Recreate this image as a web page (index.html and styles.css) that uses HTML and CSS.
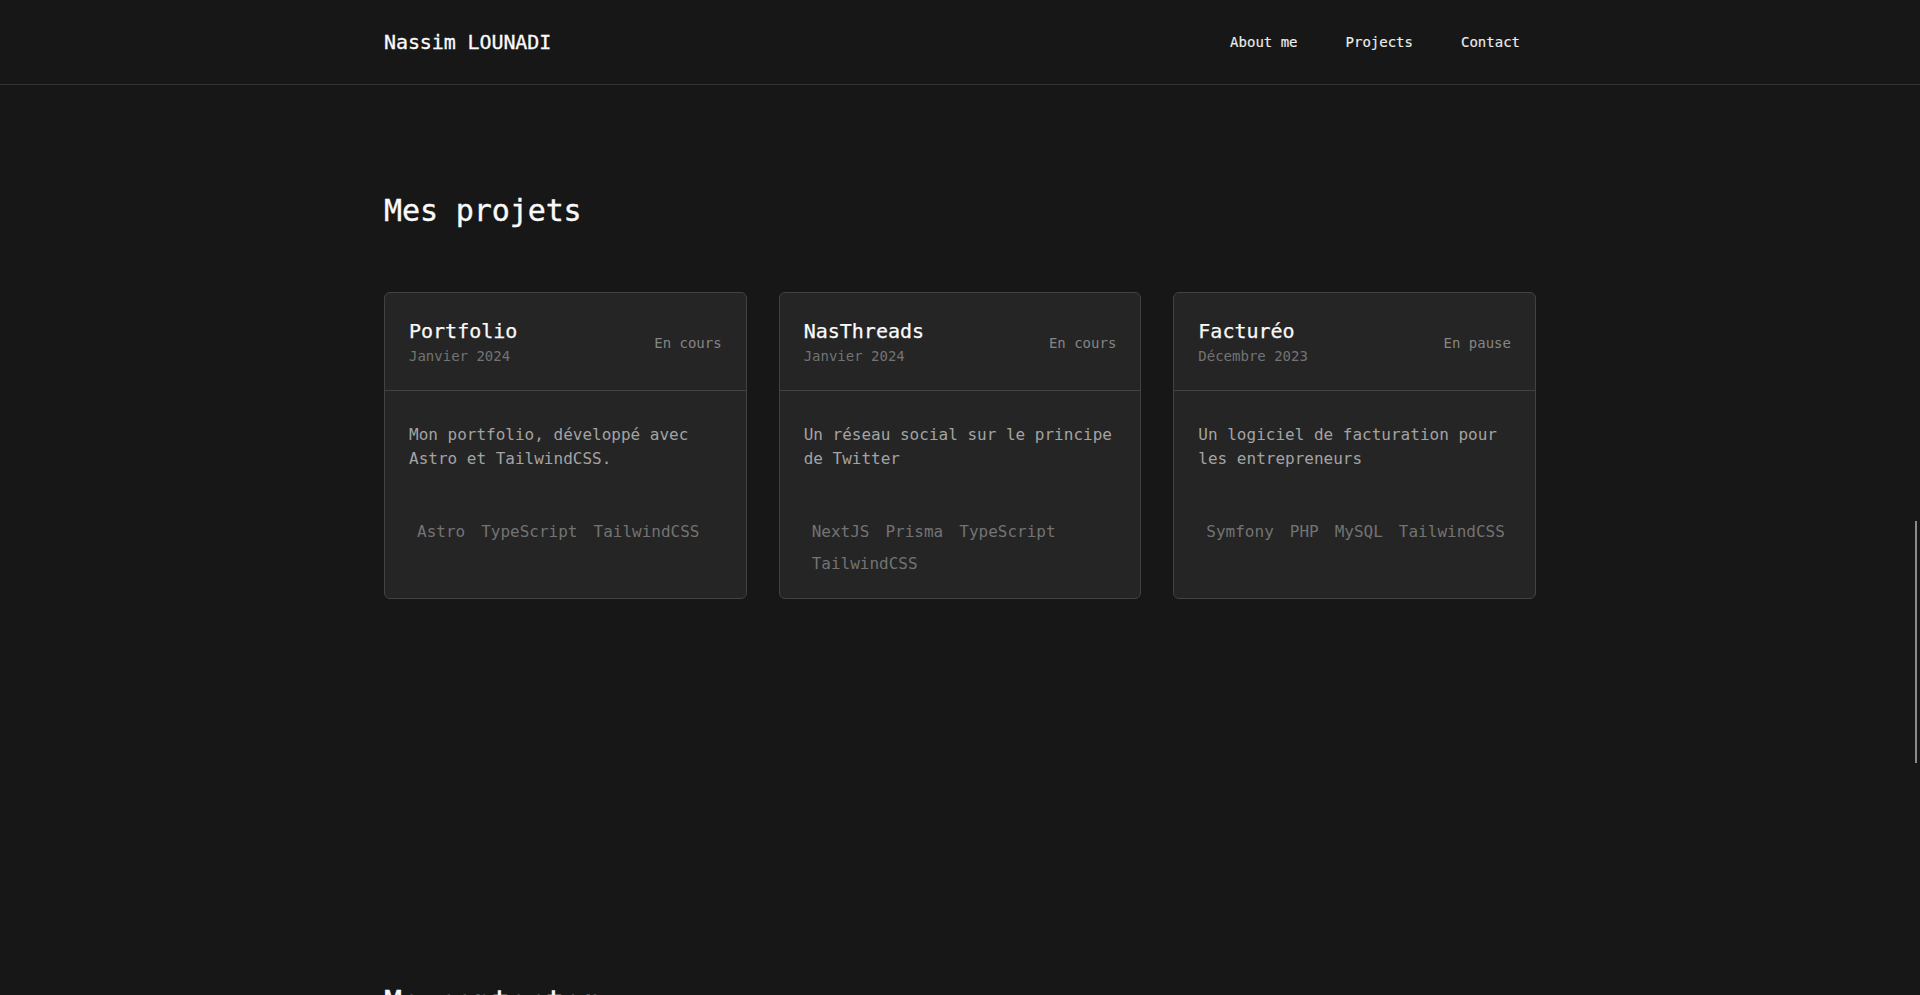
FILE: index.html
```html
<!DOCTYPE html>
<html lang="fr">
<head>
<meta charset="utf-8">
<title>Nassim LOUNADI</title>
<link rel="stylesheet" href="styles.css">
</head>
<body>
<header class="site-header">
  <div class="container header-inner">
    <a class="logo" href="#">Nassim LOUNADI</a>
    <nav class="nav">
      <a href="#about">About me</a>
      <a href="#projects">Projects</a>
      <a href="#contact">Contact</a>
    </nav>
  </div>
</header>

<main>
  <section class="container section projects" id="projects">
    <h2 class="section-title">Mes projets</h2>
    <div class="cards">
      <article class="card">
        <div class="card-head">
          <div class="card-titles">
            <h3 class="card-title">Portfolio</h3>
            <p class="card-date">Janvier 2024</p>
          </div>
          <span class="card-status">En cours</span>
        </div>
        <div class="card-body">
          <p class="card-desc">Mon portfolio, développé avec Astro et TailwindCSS.</p>
          <ul class="tags">
            <li>Astro</li><li>TypeScript</li><li>TailwindCSS</li>
          </ul>
        </div>
      </article>
      <article class="card">
        <div class="card-head">
          <div class="card-titles">
            <h3 class="card-title">NasThreads</h3>
            <p class="card-date">Janvier 2024</p>
          </div>
          <span class="card-status">En cours</span>
        </div>
        <div class="card-body">
          <p class="card-desc">Un réseau social sur le principe de Twitter</p>
          <ul class="tags">
            <li>NextJS</li><li>Prisma</li><li>TypeScript</li><li>TailwindCSS</li>
          </ul>
        </div>
      </article>
      <article class="card">
        <div class="card-head">
          <div class="card-titles">
            <h3 class="card-title">Facturéo</h3>
            <p class="card-date">Décembre 2023</p>
          </div>
          <span class="card-status">En pause</span>
        </div>
        <div class="card-body">
          <p class="card-desc">Un logiciel de facturation pour les entrepreneurs</p>
          <ul class="tags">
            <li>Symfony</li><li>PHP</li><li>MySQL</li><li>TailwindCSS</li>
          </ul>
        </div>
      </article>
    </div>
  </section>

  <section class="container section contact" id="contact">
    <h2 class="section-title">Me contacter</h2>
  </section>
</main>

<div class="scroll-thumb"></div>
</body>
</html>
```

FILE: styles.css
```css
html {
  scrollbar-width: none;
}
html::-webkit-scrollbar {
  display: none;
}
* {
  box-sizing: border-box;
}
body {
  margin: 0;
  background: #171717;
  color: #fafafa;
  font-family: "DejaVu Sans Mono", "Liberation Mono", monospace;
}
a {
  color: inherit;
  text-decoration: none;
}
h2, h3, p, ul {
  margin: 0;
  padding: 0;
}
.container {
  max-width: 1152px;
  margin: 0 auto;
}

.site-header {
  border-bottom: 1px solid #333333;
}
.header-inner {
  height: 84px;
  display: flex;
  align-items: center;
  justify-content: space-between;
}
.logo {
  font-size: 20px;
  line-height: 28px;
  color: #fafafa;
  letter-spacing: -0.1px;
  -webkit-text-stroke: 0.3px #fafafa;
}
.nav {
  display: flex;
  gap: 16px;
}
.nav a {
  font-size: 14px;
  line-height: 20px;
  padding: 0 16px;
  color: #ececec;
  -webkit-text-stroke: 0.15px #ececec;
}

.section-title {
  font-size: 30px;
  line-height: 36px;
  font-weight: normal;
  color: #fafafa;
  letter-spacing: -0.1px;
  -webkit-text-stroke: 0.35px #fafafa;
}
.projects {
  padding-top: 108px;
  padding-bottom: 192px;
}
.contact {
  padding-top: 193px;
  padding-bottom: 200px;
}

.cards {
  margin-top: 63px;
  display: grid;
  grid-template-columns: repeat(3, 1fr);
  gap: 32px;
}
.card {
  background: #252525;
  border: 1px solid #424242;
  border-radius: 6px;
  display: flex;
  flex-direction: column;
}
.card-head {
  display: flex;
  align-items: center;
  justify-content: space-between;
  padding: 24px;
  border-bottom: 1px solid #424242;
}
.card-title {
  font-size: 20px;
  line-height: 28px;
  font-weight: normal;
  color: #fafafa;
  -webkit-text-stroke: 0.25px #fafafa;
}
.card-date {
  font-size: 14px;
  line-height: 20px;
  padding-top: 1px;
  color: #737373;
}
.card-status {
  font-size: 14px;
  line-height: 20px;
  margin-top: 3px;
  color: #858585;
}
.card-body {
  padding: 32px 24px 18px;
  flex: 1;
}
.card-desc {
  font-size: 16px;
  line-height: 24px;
  color: #a3a3a3;
}
.tags {
  list-style: none;
  display: flex;
  flex-wrap: wrap;
  margin: 45px -8px 0 0;
}
.tags li {
  font-size: 16px;
  line-height: 24px;
  padding: 4px 8px;
  color: #737373;
}

.scroll-thumb {
  position: fixed;
  right: 3px;
  top: 521px;
  width: 2px;
  height: 242px;
  background: #8a8a8a;
}
```
